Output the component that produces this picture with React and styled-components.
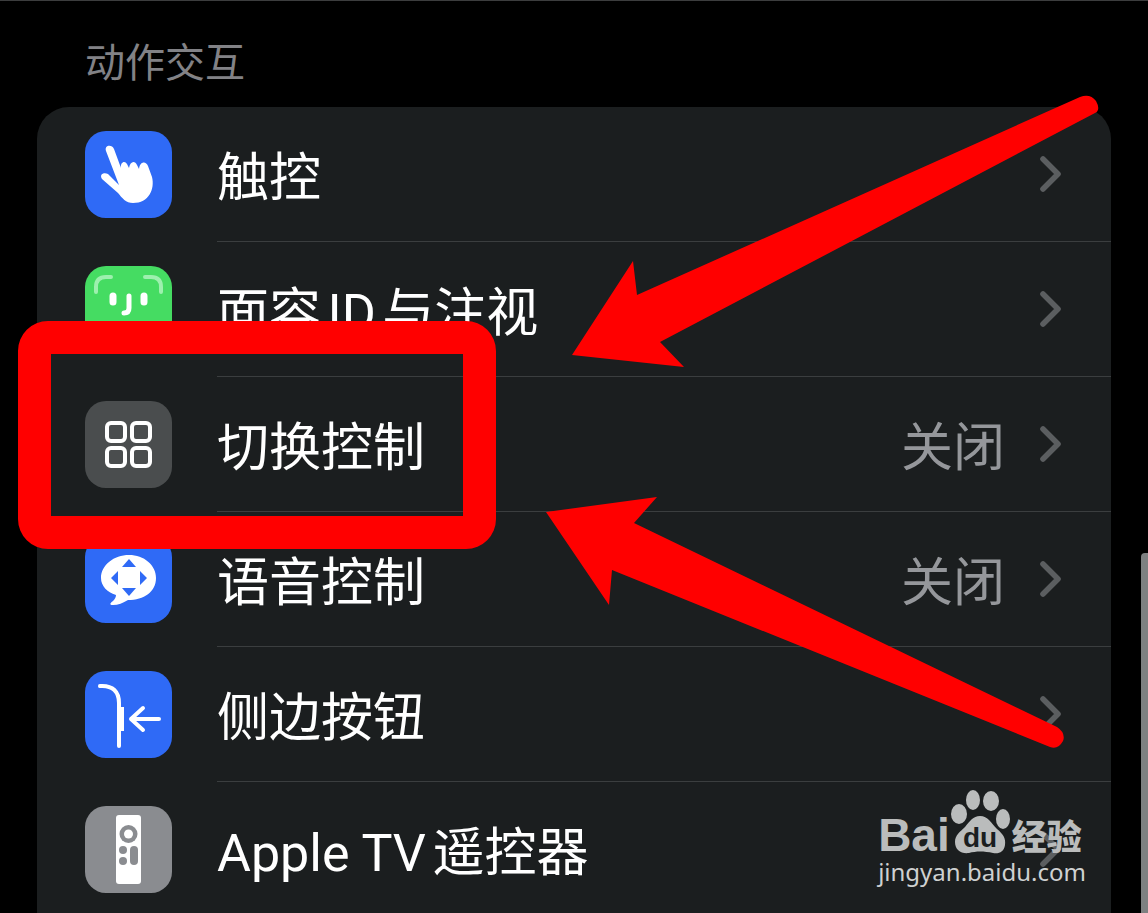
import React from "react";
import styled, { createGlobalStyle } from "styled-components";

const GlobalStyle = createGlobalStyle`
  *, *::before, *::after { box-sizing: border-box; }
  html, body { margin: 0; background: #000; }
  body { font-family: Roboto, "Noto Sans CJK SC", sans-serif; }
`;

const Screen = styled.main`
  position: relative;
  height: 100vh;
  overflow: hidden;
  background: #000;
  border-top: 1px solid #3c3d3e;
  padding: 0 37px;
`;

const SectionTitle = styled.h2`
  margin: 0;
  padding: 33px 48px 13px;
  font-size: 40px;
  line-height: 60px;
  font-weight: 400;
  color: #828286;
`;

const Card = styled.ul`
  list-style: none;
  margin: 0;
  padding: 0;
  background: #1b1e1f;
  border-radius: 32px 32px 0 0;
`;

const Row = styled.li`
  position: relative;
`;

const RowLink = styled.a`
  display: flex;
  align-items: stretch;
  padding-left: 48px;
  color: #fff;
  text-decoration: none;
`;

const IconTile = styled.span`
  flex: none;
  align-self: center;
  width: 87px;
  height: 87px;
  margin-right: 45px;
  border-radius: 21px;
  background: ${(p) => p.$color};
  overflow: hidden;
  svg { display: block; }
`;

const RowBody = styled.span`
  flex: 1;
  display: flex;
  align-items: center;
  height: 135px;
  padding-right: 48px;
  border-bottom: 1px solid #3b3e3f;
`;

const RowText = styled.span`
  padding-top: 9px;
  font-size: 52px;
  line-height: 76px;
  font-weight: 400;
  text-autospace: normal;
`;

const Label = styled(RowText)`
  flex: 1;
`;

const Value = styled(RowText)`
  margin-right: 34px;
  color: #95979b;
`;

const Chevron = styled.svg`
  flex: none;
`;

const Highlight = styled.div`
  position: absolute;
  z-index: 1;
  left: -19px;
  top: -56px;
  width: 478px;
  height: 228px;
  border: 33px solid #f00;
  border-radius: 30px;
  pointer-events: none;
`;

const Arrows = styled.svg`
  position: absolute;
  z-index: 2;
  right: 0;
  top: -1px;
  pointer-events: none;
`;

const ScrollThumb = styled.div`
  position: absolute;
  right: 0;
  top: 552px;
  bottom: 0;
  width: 7px;
  border-radius: 4px 0 0 0;
  background: #7e8081;
`;

const Watermark = styled.div`
  position: absolute;
  right: 62px;
  bottom: 24px;
  color: #babcbc;
`;

const Brand = styled.div`
  display: flex;
  align-items: flex-end;
  height: 65px;
`;

const BrandLatin = styled.span`
  font: 700 46px/40px "Liberation Sans", sans-serif;
`;

const BrandHan = styled.span`
  margin-left: 2px;
  font: 900 35px/40px "Noto Sans CJK SC", sans-serif;
`;

const Domain = styled.div`
  font: 400 24px/34px "Noto Sans", sans-serif;
  color: #cfd1d1;
`;

const icons = {
  touch: (
    <svg width="87" height="87" viewBox="0 0 87 87" aria-hidden="true">
      <path d="M21 20C19 14 27 13 29 18L36 37C35 31 40 29 42 33L44 37C45 30 50 29 52 34L54 38C55 30 61 30 63 35L67 46C70 58 64 72 48 72C41 72 37 67 33 62L17 48C14 43 19 41 23 43L34 54Z" fill="#fff" />
    </svg>
  ),
  face: (
    <svg width="87" height="87" viewBox="0 0 87 87" fill="none" strokeLinecap="round" aria-hidden="true">
      <path d="M11 26V21Q11 11 21 11H26M60 11H66Q76 11 76 21V26M11 61V66Q11 76 21 76H26M60 76H66Q76 76 76 66V61" stroke="#9df0ae" strokeWidth="4" />
      <path d="M28 30V36M59 30V36" stroke="#fff" strokeWidth="7" />
      <path d="M44 30V42Q44 47 39 47" stroke="#fff" strokeWidth="5" />
      <path d="M31 59Q43 68 56 59" stroke="#fff" strokeWidth="4" />
    </svg>
  ),
  grid: (
    <svg width="87" height="87" viewBox="0 0 87 87" fill="none" stroke="#fff" strokeWidth="4" aria-hidden="true">
      <rect x="22" y="22" width="18" height="18" rx="4" />
      <rect x="47" y="22" width="18" height="18" rx="4" />
      <rect x="22" y="47" width="18" height="18" rx="4" />
      <rect x="47" y="47" width="18" height="18" rx="4" />
    </svg>
  ),
  voice: (
    <svg width="87" height="87" viewBox="0 0 87 87" aria-hidden="true">
      <path d="M44 19C59 19 71 29 71 42C71 56 59 64 43 64C38 67 33 69 28 69C24 69 25 67 28 65C30 63 31 61 31 59C22 56 16 50 16 42C16 29 29 19 44 19Z" fill="#fff" />
      <path d="M44 23L51 31H37ZM44 60L37 52H51ZM26 42L33 35V49ZM62 42L55 35V49Z" fill="#2f6af6" />
    </svg>
  ),
  side: (
    <svg width="87" height="87" viewBox="0 0 87 87" fill="none" stroke="#fff" strokeWidth="4" strokeLinecap="round" strokeLinejoin="round" aria-hidden="true">
      <path d="M15 15C28 14 34 21 34 32V75" />
      <path d="M33 36H39V60H33Z" fill="#fff" stroke="none" />
      <path d="M74 48H46M58 37L46 48L58 59" />
    </svg>
  ),
  remote: (
    <svg width="87" height="87" viewBox="0 0 87 87" aria-hidden="true">
      <rect x="31" y="9" width="25" height="69" rx="3" fill="#fff" />
      <g fill="#8a8c90">
        <circle cx="43.5" cy="28" r="9" />
        <circle cx="38" cy="44" r="4" />
        <circle cx="38" cy="55" r="4" />
        <rect x="45" y="40" width="8" height="19" rx="4" />
      </g>
      <circle cx="43.5" cy="28" r="4.5" fill="#fff" />
    </svg>
  ),
};

const rows = [
  { label: "触控", icon: "touch", color: "#2f6af6" },
  { label: "面容ID与注视", icon: "face", color: "#45dc62" },
  { label: "切换控制", icon: "grid", color: "#4a4d4e", value: "关闭", highlighted: true },
  { label: "语音控制", icon: "voice", color: "#2f6af6", value: "关闭" },
  { label: "侧边按钮", icon: "side", color: "#2f6af6" },
  { label: "Apple TV遥控器", icon: "remote", color: "#8a8c90" },
];

function SettingRow({ label, icon, color, value, highlighted }) {
  return (
    <Row>
      <RowLink href="#">
        <IconTile $color={color}>{icons[icon]}</IconTile>
        <RowBody>
          <Label>{label}</Label>
          {value && <Value>{value}</Value>}
          <Chevron width="24" height="40" viewBox="0 0 24 40" fill="none" stroke="#5b5e60" strokeWidth="5.6" strokeLinecap="round" strokeLinejoin="round" aria-hidden="true">
            <path d="M4 5L19 20L4 35" />
          </Chevron>
        </RowBody>
      </RowLink>
      {highlighted && <Highlight />}
    </Row>
  );
}

export default function App() {
  return (
    <>
      <GlobalStyle />
      <Screen>
        <SectionTitle>动作交互</SectionTitle>
        <Card>
          {rows.map((row) => (
            <SettingRow key={row.label} {...row} />
          ))}
        </Card>
        <Watermark>
          <Brand>
            <BrandLatin>Bai</BrandLatin>
            <svg width="60" height="66" viewBox="0 0 60 66" fill="#babcbc" role="img" aria-label="du">
              <ellipse cx="9" cy="25" rx="8" ry="10" />
              <ellipse cx="23" cy="11" rx="7" ry="10" />
              <ellipse cx="41" cy="12" rx="8" ry="10" />
              <ellipse cx="53" cy="30" rx="7" ry="10" />
              <path d="M30 27C38 27 41 34 47 40C53 45 56 49 55 56C54 63 49 65 43 64C34 62 26 62 19 64C11 65 5 61 5 53C5 46 10 43 15 38C20 32 23 27 30 27Z" />
              <text x="30" y="58" textAnchor="middle" fontFamily="Liberation Sans, sans-serif" fontSize="28" fontWeight="700" fill="#1b1e1f">du</text>
            </svg>
            <BrandHan>经验</BrandHan>
          </Brand>
          <Domain>jingyan.baidu.com</Domain>
        </Watermark>
        <Arrows width="611" height="760" viewBox="537 0 611 760" fill="#f00" aria-hidden="true">
          <path d="M572 355L633 261L637 295L1080 97Q1090 93 1096 101Q1101 110 1095 113L660 342L684 367Z" />
          <path d="M546 512L657 497L634 523L1057 727Q1066 733 1063 741Q1058 750 1050 747L612 570L609 605Z" />
        </Arrows>
        <ScrollThumb />
      </Screen>
    </>
  );
}
